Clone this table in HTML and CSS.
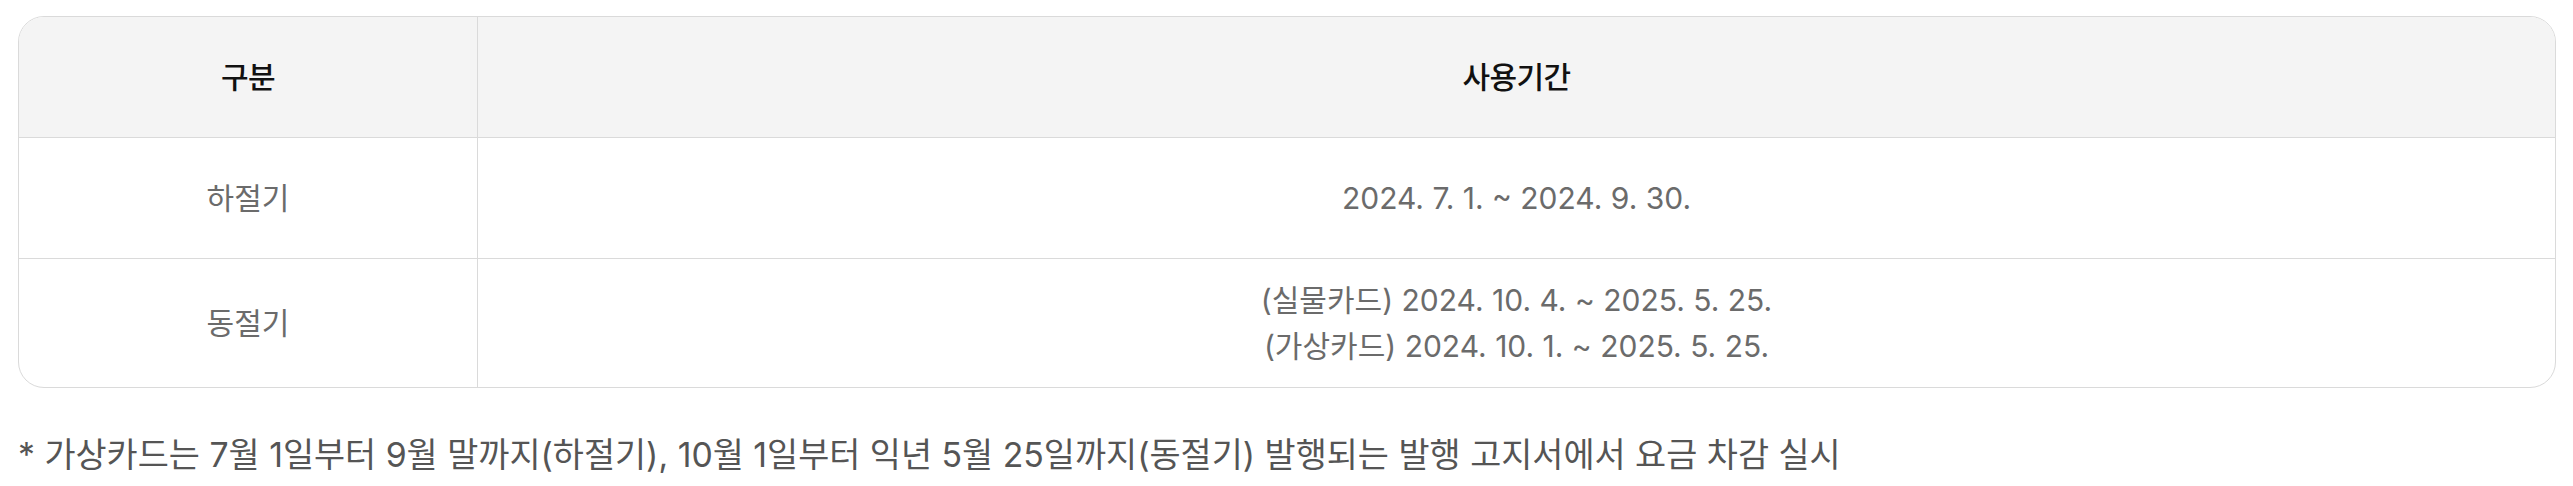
FILE: index.html
```html
<!DOCTYPE html>
<html lang="ko">
<head>
<meta charset="utf-8">
<title>사용기간</title>
<link rel="stylesheet" href="styles.css">
</head>
<body>
<div class="page">
  <div class="table-wrap">
    <table class="period-table">
      <thead>
        <tr>
          <th class="col-type">구분</th>
          <th>사용기간</th>
        </tr>
      </thead>
      <tbody>
        <tr>
          <td class="col-type">하절기</td>
          <td>2024. 7. 1. ~ 2024. 9. 30.</td>
        </tr>
        <tr>
          <td class="col-type">동절기</td>
          <td>(실물카드) 2024. 10. 4. ~ 2025. 5. 25.<br>(가상카드) 2024. 10. 1. ~ 2025. 5. 25.</td>
        </tr>
      </tbody>
    </table>
  </div>
  <p class="note">* 가상카드는 7월 1일부터 9월 말까지(하절기), 10월 1일부터 익년 5월 25일까지(동절기) 발행되는 발행 고지서에서 요금 차감 실시</p>
</div>
</body>
</html>
```

FILE: styles.css
```css
html, body {
  margin: 0;
  padding: 0;
  background: #ffffff;
}

body {
  font-family: Inter, "Noto Sans CJK KR", sans-serif;
  font-size: 30px;
  line-height: 46px;
}

.page {
  padding: 16px 17px 0 18px;
}

.table-wrap {
  border: 1px solid #dadada;
  border-radius: 26px;
  overflow: hidden;
}

.period-table {
  width: 100%;
  border-collapse: separate;
  border-spacing: 0;
  table-layout: fixed;
}

.period-table th,
.period-table td {
  height: 121px;
  box-sizing: border-box;
  padding: 18px 20px;
  text-align: center;
  vertical-align: middle;
}

.period-table th {
  background: #f4f4f4;
  color: #111111;
  font-weight: 500;
  letter-spacing: -0.02em;
  border-bottom: 1px solid #dadada;
}

.period-table td {
  color: #6b6b6b;
  font-weight: 400;
}

.period-table tbody tr:first-child td {
  border-bottom: 1px solid #dadada;
}

.period-table .col-type {
  width: 459px;
  border-right: 1px solid #dadada;
}

.note {
  margin: 44px 0 0 0;
  font-size: 33.8px;
  line-height: 46px;
  color: #555555;
}
```
